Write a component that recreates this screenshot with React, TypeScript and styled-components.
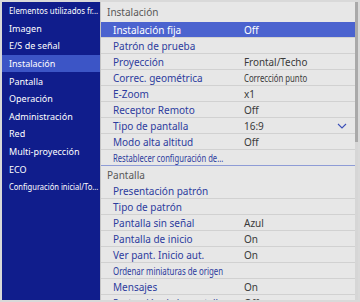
import { useLayoutEffect, useRef, useState } from "react";
import styled, { createGlobalStyle } from "styled-components";

const GlobalStyle = createGlobalStyle`
  html, body {
    margin: 0;
    padding: 0;
    background: #d9d9d9;
  }
  body {
    font-family: "Noto Sans", "Open Sans", sans-serif;
    font-size: 10px;
  }
`;

const Frame = styled.div`
  margin: 2px;
  width: 356px;
  height: 298px;
  display: grid;
  grid-template-columns: 98px 1fr;
  gap: 1px;
  background: #c4c4c4;
  overflow: hidden;
`;

const SideMenu = styled.ul`
  margin: 0;
  padding: 0;
  list-style: none;
  background: #101d8c;
  overflow: hidden;
`;

const SideItem = styled.li<{ $active?: boolean }>`
  height: 17.6px;
  display: flex;
  align-items: center;
  padding-left: 7px;
  font-size: 9px;
  color: #ffffff;
  white-space: nowrap;
  background: ${({ $active }) => ($active ? "#3c55c6" : "transparent")};
`;

const Panel = styled.div`
  display: flex;
  background: #e7e7e7;
  overflow: hidden;
`;

const List = styled.div`
  flex: 1;
  display: flex;
  flex-direction: column;
`;

const SectionHeader = styled.div<{ $h: number }>`
  height: ${({ $h }) => $h}px;
  display: flex;
  align-items: center;
  padding-left: 6px;
  color: #585858;
  flex-shrink: 0;
`;

const Row = styled.div<{ $active?: boolean; $last?: boolean }>`
  height: 15px;
  flex-shrink: 0;
  display: grid;
  grid-template-columns: 143px 1fr 18px;
  align-items: center;
  border-bottom: 1px solid ${({ $last }) => ($last ? "#8e9cd6" : "#d1d1d1")};
  background: ${({ $active }) => ($active ? "#4b63cf" : "transparent")};
  color: ${({ $active }) => ($active ? "#ffffff" : "#2d3c9e")};
`;

const Label = styled.span`
  padding-left: 12px;
  white-space: nowrap;
`;

const Value = styled.span<{ $active?: boolean }>`
  color: ${({ $active }) => ($active ? "#ffffff" : "#3a3a3a")};
  white-space: nowrap;
`;

const Squeeze = styled.span`
  display: inline-block;
  white-space: nowrap;
  transform-origin: left center;
`;

const Track = styled.div`
  width: 3px;
  background: #d6d6d6;
  display: flex;
  flex-direction: column;
`;

const Thumb = styled.div`
  height: 140px;
  background: #a9a9a9;
`;

// the OSD squeezes long strings horizontally so they fit their column
const FitText = ({ text, max }: { text: string; max: number }) => {
  const ref = useRef<HTMLSpanElement>(null);
  const [scale, setScale] = useState(1);
  useLayoutEffect(() => {
    if (!ref.current) return;
    const w = ref.current.offsetWidth;
    setScale(w > max ? max / w : 1);
  }, [text, max]);
  return (
    <Squeeze ref={ref} style={{ transform: `scaleX(${scale})` }}>
      {text}
    </Squeeze>
  );
};

const Chevron = () => (
  <svg width="10" height="6" viewBox="0 0 10 6" fill="none">
    <path d="M1 1l4 4 4-4" stroke="#3b4fb8" strokeWidth="1.1" />
  </svg>
);

const sideItems = [
  "Elementos utilizados fr...",
  "Imagen",
  "E/S de señal",
  "Instalación",
  "Pantalla",
  "Operación",
  "Administración",
  "Red",
  "Multi-proyección",
  "ECO",
  "Configuración inicial/To...",
];

type Item = { label: string; value?: string; chevron?: boolean; active?: boolean };

const install: Item[] = [
  { label: "Instalación fija", value: "Off", active: true },
  { label: "Patrón de prueba" },
  { label: "Proyección", value: "Frontal/Techo" },
  { label: "Correc. geométrica", value: "Corrección punto" },
  { label: "E-Zoom", value: "x1" },
  { label: "Receptor Remoto", value: "Off" },
  { label: "Tipo de pantalla", value: "16:9", chevron: true },
  { label: "Modo alta altitud", value: "Off" },
  { label: "Restablecer configuración de..." },
];

const screen: Item[] = [
  { label: "Presentación patrón" },
  { label: "Tipo de patrón" },
  { label: "Pantalla sin señal", value: "Azul" },
  { label: "Pantalla de inicio", value: "On" },
  { label: "Ver pant. Inicio aut.", value: "On" },
  { label: "Ordenar miniaturas de origen" },
  { label: "Mensajes", value: "On" },
  { label: "Protección de la pantalla", value: "Off" },
];

const renderRows = (items: Item[], markLast: boolean) =>
  items.map((it, i) => (
    <Row key={it.label} $active={it.active} $last={markLast && i === items.length - 1}>
      <Label>
        <FitText text={it.label} max={110} />
      </Label>
      <Value $active={it.active}>
        {it.value && <FitText text={it.value} max={63} />}
      </Value>
      {it.chevron ? <Chevron /> : <span />}
    </Row>
  ));

export default function App() {
  return (
    <>
      <GlobalStyle />
      <Frame>
        <SideMenu>
          {sideItems.map((s) => (
            <SideItem key={s} $active={s === "Instalación"}>
              <FitText text={s} max={89} />
            </SideItem>
          ))}
        </SideMenu>
        <Panel>
          <List>
            <SectionHeader $h={20}>Instalación</SectionHeader>
            {renderRows(install, true)}
            <SectionHeader $h={17}>Pantalla</SectionHeader>
            {renderRows(screen, false)}
          </List>
          <Track>
            <Thumb />
          </Track>
        </Panel>
      </Frame>
    </>
  );
}
